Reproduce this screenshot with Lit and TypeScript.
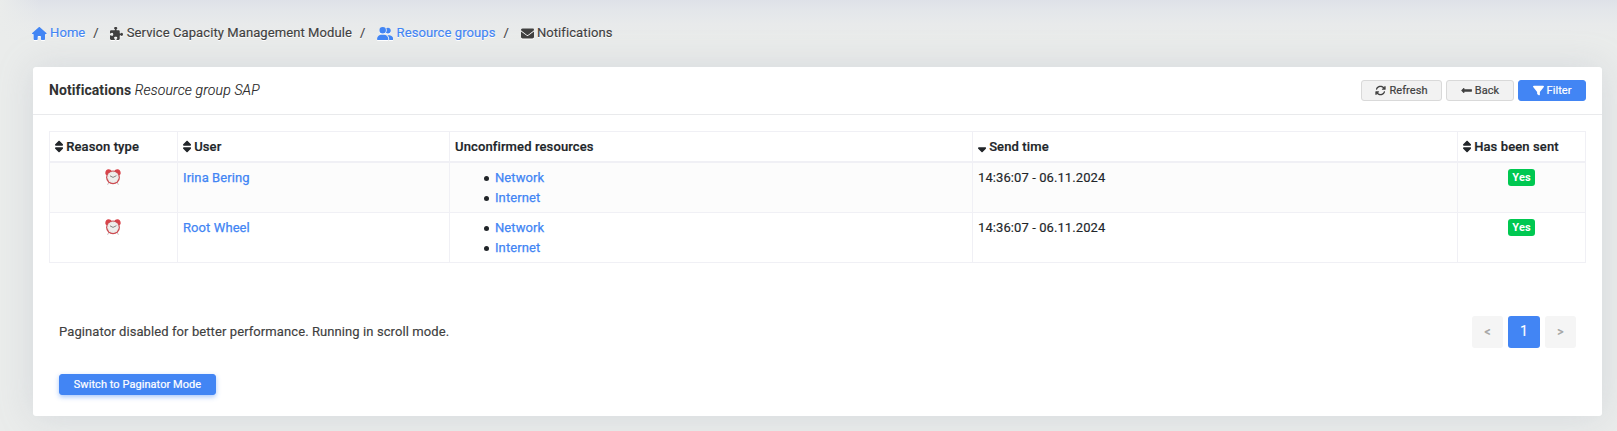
import { LitElement, html, css, svg, nothing } from "lit";
import { customElement, property } from "lit/decorators.js";
import { classMap } from "lit/directives/class-map.js";

const ICONS: Record<string, { w: number; d: string }> = {
  home: { w: 576, d: "M575.8 255.5c0 18-15 32.1-32 32.1h-32l.7 160.2c0 2.7-.2 5.4-.5 8.1V472c0 22.1-17.9 40-40 40H456c-1.1 0-2.2 0-3.3-.1c-1.4 .1-2.8 .1-4.2 .1H416 392c-22.1 0-40-17.9-40-40V448 384c0-17.7-14.3-32-32-32H256c-17.7 0-32 14.3-32 32v64 24c0 22.1-17.9 40-40 40H160 128.1c-1.5 0-3-.1-4.5-.2c-1.2 .1-2.4 .2-3.6 .2H104c-22.1 0-40-17.9-40-40V360c0-.9 0-1.9 .1-2.8V287.6H32c-18 0-32-14-32-32.1c0-9 3-17 10-24L266.4 8c7-7 15-8 22-8s15 2 21 7L564.8 231.5c8 7 12 15 11 24z" },
  puzzle: { w: 512, d: "M192 104.8c0-9.2-5.8-17.3-13.2-22.8C167.2 73.3 160 61.3 160 48c0-26.5 28.7-48 64-48s64 21.5 64 48c0 13.3-7.2 25.3-18.8 34c-7.4 5.5-13.2 13.6-13.2 22.8c0 12.8 10.4 23.2 23.2 23.2H336c26.5 0 48 21.5 48 48v56.8c0 12.8 10.4 23.2 23.2 23.2c9.2 0 17.3-5.8 22.8-13.2c8.7-11.6 20.7-18.8 34-18.8c26.5 0 48 28.7 48 64s-21.5 64-48 64c-13.3 0-25.3-7.2-34-18.8c-5.5-7.4-13.6-13.2-22.8-13.2c-12.8 0-23.2 10.4-23.2 23.2V464c0 26.5-21.5 48-48 48H279.2c-12.8 0-23.2-10.4-23.2-23.2c0-9.2 5.8-17.3 13.2-22.8c11.6-8.7 18.8-20.7 18.8-34c0-26.5-28.7-48-64-48s-64 21.5-64 48c0 13.3 7.2 25.3 18.8 34c7.4 5.5 13.2 13.6 13.2 22.8c0 12.8-10.4 23.2-23.2 23.2H48c-26.5 0-48-21.5-48-48V343.2C0 330.4 10.4 320 23.2 320c9.2 0 17.3 5.8 22.8 13.2C54.7 344.8 66.7 352 80 352c26.5 0 48-28.7 48-64s-21.5-64-48-64c-13.3 0-25.3 7.2-34 18.8C40.5 250.2 32.4 256 23.2 256C10.4 256 0 245.6 0 232.8V176c0-26.5 21.5-48 48-48H168.8c12.8 0 23.2-10.4 23.2-23.2z" },
  users: { w: 640, d: "M96 128a128 128 0 1 1 256 0A128 128 0 1 1 96 128zM0 482.3C0 383.8 79.8 304 178.3 304h91.4C368.2 304 448 383.8 448 482.3c0 16.4-13.3 29.7-29.7 29.7H29.7C13.3 512 0 498.7 0 482.3zM609.3 512H471.4c5.4-9.4 8.6-20.3 8.6-32v-8c0-60.7-27.1-115.2-69.8-151.8c2.4-.1 4.7-.2 7.1-.2h61.4C567.8 320 640 392.2 640 481.3c0 17-13.8 30.7-30.7 30.7zM432 256c-31 0-59-12.6-79.3-32.9C372.4 196.5 384 163.6 384 128c0-26.8-6.6-52.1-18.3-74.3C384.3 40.1 407.2 32 432 32c61.9 0 112 50.1 112 112s-50.1 112-112 112z" },
  envelope: { w: 512, d: "M48 64C21.5 64 0 85.5 0 112c0 15.1 7.1 29.3 19.2 38.4L236.8 313.6c11.4 8.5 27 8.5 38.4 0L492.8 150.4c12.1-9.1 19.2-23.3 19.2-38.4c0-26.5-21.5-48-48-48H48zM0 176V384c0 35.3 28.7 64 64 64H448c35.3 0 64-28.7 64-64V176L294.4 339.2c-22.8 17.1-54 17.1-76.8 0L0 176z" },
  refresh: { w: 512, d: "M105.1 202.6c7.7-21.8 20.2-42.3 37.8-59.8c62.5-62.5 163.8-62.5 226.3 0L386.3 160H352c-17.7 0-32 14.3-32 32s14.3 32 32 32H463.5c0 0 0 0 0 0h.4c17.7 0 32-14.3 32-32V80c0-17.7-14.3-32-32-32s-32 14.3-32 32v35.2L414.4 97.6c-87.5-87.5-229.3-87.5-316.8 0C73.2 122 55.6 150.7 44.8 181.4c-5.9 16.7 2.9 34.9 19.5 40.8s34.9-2.9 40.8-19.5zM39 289.3c-5 1.5-9.8 4.2-13.7 8.2c-4 4-6.7 8.8-8.1 14c-.3 1.2-.6 2.5-.8 3.8c-.3 1.7-.4 3.4-.4 5.1V432c0 17.7 14.3 32 32 32s32-14.3 32-32V396.9l17.6 17.5 0 0c87.5 87.4 229.3 87.4 316.7 0c24.4-24.4 42.1-53.1 52.9-83.7c5.9-16.7-2.9-34.9-19.5-40.8s-34.9 2.9-40.8 19.5c-7.7 21.8-20.2 42.3-37.8 59.8c-62.5 62.5-163.8 62.5-226.3 0l-.1-.1L125.6 352H160c17.7 0 32-14.3 32-32s-14.3-32-32-32H48.4c-1.6 0-3.2 .1-4.8 .3s-3.1 .5-4.6 1z" },
  back: { w: 512, d: "M160 310H490c10 0 18-8 18-18v-72c0-10-8-18-18-18H160v-42c0-21-26-32-41-17L17 239c-9 9-9 25 0 34l102 96c15 15 41 4 41-17z" },
  filter: { w: 512, d: "M3.9 54.9C10.5 40.9 24.5 32 40 32H472c15.5 0 29.5 8.9 36.1 22.9s4.6 30.5-5.2 42.5L320 320.9V448c0 12.1-6.8 23.2-17.7 28.6s-23.8 4.3-33.5-3l-64-48c-8.1-6-12.8-15.5-12.8-25.6V320.9L9 97.3C-.7 85.4-2.8 68.8 3.9 54.9z" },
  sort: { w: 320, d: "M137.4 41.4c12.5-12.5 32.8-12.5 45.3 0l128 128c9.2 9.2 11.9 22.9 6.9 34.9s-16.6 19.8-29.6 19.8H32c-12.9 0-24.6-7.8-29.6-19.8s-2.2-25.7 6.9-34.9l128-128zm0 429.3l-128-128c-9.2-9.2-11.9-22.9-6.9-34.9s16.6-19.8 29.6-19.8H288c12.9 0 24.6 7.8 29.6 19.8s2.2 25.7-6.9 34.9l-128 128c-12.5 12.5-32.8 12.5-45.3 0z" },
  sortDown: { w: 320, d: "M137.4 470.7l-128-128c-9.2-9.2-11.9-22.9-6.9-34.9s16.6-19.8 29.6-19.8H288c12.9 0 24.6 7.8 29.6 19.8s2.2 25.7-6.9 34.9l-128 128c-12.5 12.5-32.8 12.5-45.3 0z" },
};

@customElement("fa-icon")
class FaIcon extends LitElement {
  static styles = css`
    :host { display: inline-flex; flex: none; }
    svg { display: block; height: 1em; fill: currentColor; }
  `;
  @property() name = "home";
  render() {
    const icon = ICONS[this.name];
    return html`<svg viewBox="0 0 ${icon.w} 512">${svg`<path d=${icon.d}></path>`}</svg>`;
  }
}

@customElement("alarm-clock")
class AlarmClock extends LitElement {
  static styles = css`
    :host { display: inline-flex; }
    svg { display: block; width: 16px; height: 16px; }
  `;
  render() {
    return html`<svg viewBox="0 0 16 16">
      <path d="M3.6 13.8 2.6 15.8M12.4 13.8l1 2" stroke="#c4c0c0" stroke-width="1"></path>
      <path d="M.4 4.800C-.1 2.300 1.500.2 3.700.3c1.400 0 2.400.8 2.800 1.800L2 6C1.100 6 .6 5.600.4 4.800zM15.600 4.800c.5-2.500-1.100-4.600-3.300-4.500-1.400 0-2.400.8-2.800 1.800L14 6c.9 0 1.400-.4 1.600-1.200z" fill="#d8434a"></path>
      <circle cx="8" cy="8.400" r="6.900" fill="#cb4b51"></circle>
      <circle cx="8" cy="8.300" r="5.700" fill="#efeeec"></circle>
      <circle cx="8" cy="8.300" r="4.800" fill="none" stroke="#c4c1bf" stroke-width=".6" stroke-dasharray=".5 2.010"></circle>
      <path d="M5 6.800 8 8.400l3.400-1.700" fill="none" stroke="#6a6563" stroke-width=".8"></path>
    </svg>`;
  }
}

interface Crumb { icon: string; label: string; link?: boolean }
const CRUMBS: Crumb[] = [
  { icon: "home", label: "Home", link: true },
  { icon: "puzzle", label: "Service Capacity Management Module" },
  { icon: "users", label: "Resource groups", link: true },
  { icon: "envelope", label: "Notifications" },
];
const COLUMNS = [
  { label: "Reason type", icon: "sort" },
  { label: "User", icon: "sort" },
  { label: "Unconfirmed resources", icon: "" },
  { label: "Send time", icon: "sortDown" },
  { label: "Has been sent", icon: "sort" },
];
const ROWS = [
  { user: "Irina Bering", resources: ["Network", "Internet"], time: "14:36:07 - 06.11.2024", sent: "Yes" },
  { user: "Root Wheel", resources: ["Network", "Internet"], time: "14:36:07 - 06.11.2024", sent: "Yes" },
];

@customElement("app-root")
class AppRoot extends LitElement {
  static styles = css`
    :host {
      display: block;
      box-sizing: border-box;
      height: 431px;
      padding: 23px 15px 0 33px;
      overflow: hidden;
      font: 400 13px/20px Roboto, "Liberation Sans", sans-serif;
      letter-spacing: 0.09px;
      -webkit-text-stroke: 0.15px;
      color: #404040;
      background:
        linear-gradient(to right, #eaeceb 0, rgba(234, 236, 235, 0) 40px) 0 0 / 100% 40px no-repeat,
        linear-gradient(#dee1e8 0, #e3e6ea 9px, #e8eaeb 24px, #eaeceb 40px);
    }
    a { color: #4285f4; text-decoration: none; cursor: pointer; }
    .crumbs { display: flex; height: 20px; margin-left: -1px; text-shadow: 0 1px 0 #fff; }
    .crumbs fa-icon { filter: drop-shadow(0 1px 0 #fff); }
    .crumb { display: flex; align-items: center; gap: 3.4px; white-space: nowrap; }
    .crumb.link { color: #4285f4; }
    .slash { width: 17px; padding-left: 8px; }
    .card {
      margin-top: 24px;
      height: 349px;
      border-radius: 3px;
      background: #fff;
      box-shadow: 0 0 35px rgba(154, 161, 180, 0.27);
    }
    .head {
      display: flex;
      align-items: center;
      justify-content: space-between;
      box-sizing: border-box;
      height: 48px;
      padding: 0 16px;
      border-bottom: 1px solid #e9eaec;
    }
    .title { font-size: 14px; color: #333; padding-bottom: 1px; -webkit-text-stroke: 0; }
    .title b { font-weight: 700; letter-spacing: 0.08px; }
    .title i { font-weight: 300; letter-spacing: 0.15px; color: #222; -webkit-text-stroke: 0.15px; }
    .actions { display: flex; gap: 4px; }
    .btn {
      display: flex;
      align-items: center;
      justify-content: center;
      gap: 3px;
      box-sizing: border-box;
      width: 68px;
      height: 21px;
      border: 1px solid #d9d9d9;
      border-radius: 3px;
      background: #f2f2f2;
      color: #404040;
      font: 400 11px/19px Roboto, sans-serif;
      letter-spacing: 0.06px;
      -webkit-text-stroke: 0.2px;
    }
    .btn.wide { width: 81px; }
    .btn.primary { background: #4285f4; border-color: #4285f4; color: #fff; }
    .body { padding: 16px; }
    table {
      width: 1537px;
      table-layout: fixed;
      border-collapse: separate;
      border-spacing: 0;
      border: solid #f0f0f5;
      border-width: 1px 0 0 1px;
      color: #212529;
    }
    th, td { box-sizing: border-box; padding: 0 5px; border: solid #f0f0f5; border-width: 0 1px 1px 0; text-align: left; }
    th { height: 31px; border-bottom-width: 2px; font-weight: 500; letter-spacing: 0.12px; -webkit-text-stroke: 0.2px; }
    .label { display: flex; align-items: center; gap: 3px; }
    td { height: 50px; padding-top: 5px; vertical-align: top; }
    tbody tr:nth-child(odd) td { background: #fcfcfc; }
    .c1, .c5 { width: 128px; }
    .c2 { width: 272px; }
    .c3 { width: 523px; }
    .c4 { width: 485px; }
    td.mid { text-align: center; }
    td.mid alarm-clock { margin: 1px 2px 0 0; vertical-align: top; }
    td a { -webkit-text-stroke: 0.25px; }
    ul { margin: 0; padding-left: 28.7px; list-style: none; }
    li { display: flex; align-items: center; gap: 6.3px; }
    li::before { content: ""; width: 5px; height: 5px; border-radius: 50%; background: #212529; }
    .badge {
      display: inline-block;
      vertical-align: top;
      margin-top: 1px;
      padding: 0 4.5px;
      height: 17px;
      border-radius: 3px;
      background: #00c851;
      color: #fff;
      font: 700 11px/18px Roboto, sans-serif;
      -webkit-text-stroke: 0;
    }
    .foot { display: flex; align-items: center; justify-content: space-between; margin: 53px 10px 0 10px; }
    .pages { display: flex; gap: 5px; }
    .page {
      width: 31px;
      height: 32px;
      border-radius: 3px;
      background: #f5f5f5;
      color: #a6a6a6;
      font-size: 12px;
      font-weight: 500;
      line-height: 32px;
      text-align: center;
    }
    .page.current { width: 32px; background: #4285f4; color: #fff; font-size: 14px; font-weight: 400; line-height: 31px; }
    .btn.switch { width: 157px; margin: 26px 0 0 10px; box-shadow: 0 2px 5px rgba(66, 133, 244, 0.45); }
  `;

  render() {
    return html`
      <nav class="crumbs">
        ${CRUMBS.map((c, i) => html`
          ${i ? html`<span class="slash">/</span>` : nothing}
          <span class=${classMap({ crumb: true, link: !!c.link })}><fa-icon name=${c.icon}></fa-icon>${c.label}</span>`)}
      </nav>
      <section class="card">
        <header class="head">
          <div class="title"><b>Notifications</b> <i>Resource group SAP</i></div>
          <div class="actions">
            <div class="btn wide"><fa-icon name="refresh"></fa-icon>Refresh</div>
            <div class="btn"><fa-icon name="back"></fa-icon>Back</div>
            <div class="btn primary"><fa-icon name="filter"></fa-icon>Filter</div>
          </div>
        </header>
        <div class="body">
          <table>
            <colgroup><col class="c1"><col class="c2"><col class="c3"><col class="c4"><col class="c5"></colgroup>
            <thead><tr>${COLUMNS.map((c) => html`<th><div class="label">${c.icon ? html`<fa-icon name=${c.icon}></fa-icon>` : nothing}${c.label}</div></th>`)}</tr></thead>
            <tbody>
              ${ROWS.map((r) => html`<tr>
                <td class="mid"><alarm-clock></alarm-clock></td>
                <td><a>${r.user}</a></td>
                <td><ul>${r.resources.map((x) => html`<li><a>${x}</a></li>`)}</ul></td>
                <td>${r.time}</td>
                <td class="mid"><span class="badge">${r.sent}</span></td>
              </tr>`)}
            </tbody>
          </table>
          <div class="foot">
            <span>Paginator disabled for better performance. Running in scroll mode.</span>
            <div class="pages"><span class="page">&lt;</span><span class="page current">1</span><span class="page">&gt;</span></div>
          </div>
          <div class="btn primary switch">Switch to Paginator Mode</div>
        </div>
      </section>`;
  }
}
